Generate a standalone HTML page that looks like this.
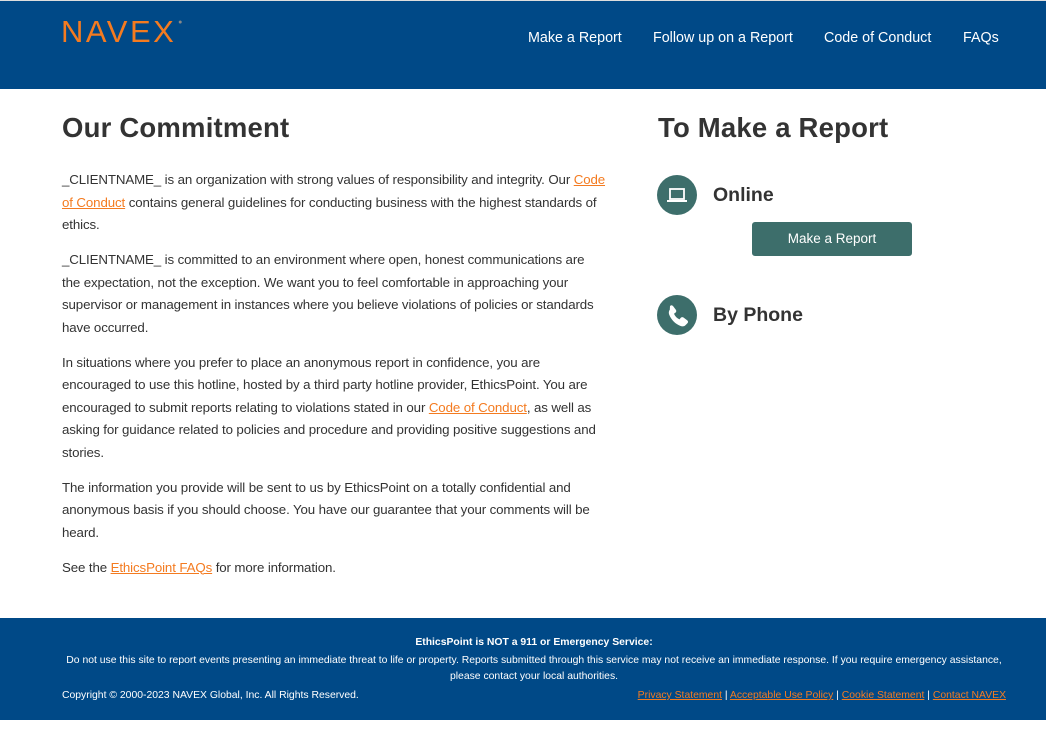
<!DOCTYPE html>
<html><head><meta charset="utf-8"><style>
*{margin:0;padding:0;box-sizing:border-box}
body{width:1046px;height:735px;background:#fff;font-family:"Liberation Sans",Arial,sans-serif;color:#333;position:relative;overflow:hidden}
.hdr{position:absolute;top:1px;left:0;width:1046px;height:88px;background:#004987}
.topline{position:absolute;top:0;left:0;width:1046px;height:1px;background:#ddd}
.logo{position:absolute;left:61px;top:13px;color:#f47b20;font-size:31px;letter-spacing:2.5px;font-weight:normal}
.logo sup{font-size:7px;color:#888;position:absolute;top:5px;right:-6px;letter-spacing:0}
.nav{position:absolute;top:29px;font-size:14.3px;color:#fff}
h1{position:absolute;font-size:27.5px;font-weight:bold;color:#333;letter-spacing:0.2px}
.main{position:absolute;left:62px;top:169px;width:547px;font-size:13.3px;line-height:22.5px;letter-spacing:-0.12px}
.main p{margin-bottom:12.5px}
a{color:#f47b20;text-decoration:underline}
.circ{position:absolute;left:657px;width:40px;height:40px;border-radius:50%;background:#3d6e6b}
.sub{position:absolute;left:713px;font-size:19.5px;font-weight:bold}
.btn{position:absolute;left:752px;top:222px;width:160px;height:34px;background:#3d6e6b;border-radius:3px;color:#fff;font-size:13.5px;text-align:center;line-height:34px}
.ftr{position:absolute;top:618px;left:0;width:1046px;height:102px;background:#004987;color:#fff;font-size:10.4px}
.ftr .c{position:absolute;left:62px;width:944px;text-align:center}
</style></head><body>
<div class="topline"></div>
<div class="hdr">
<div class="logo">NAVEX<sup>●</sup></div>
<div class="nav" style="left:528px">Make a Report</div>
<div class="nav" style="left:653px">Follow up on a Report</div>
<div class="nav" style="left:824px">Code of Conduct</div>
<div class="nav" style="left:963px">FAQs</div>
</div>
<h1 style="left:62px;top:112px">Our Commitment</h1>
<h1 style="left:658px;top:112px">To Make a Report</h1>
<div class="main">
<p>_CLIENTNAME_ is an organization with strong values of responsibility and integrity. Our <a>Code of Conduct</a> contains general guidelines for conducting business with the highest standards of ethics.</p>
<p>_CLIENTNAME_ is committed to an environment where open, honest communications are<br>the expectation, not the exception. We want you to feel comfortable in approaching your supervisor or management in instances where you believe violations of policies or standards have occurred.</p>
<p>In situations where you prefer to place an anonymous report in confidence, you are encouraged to use this hotline, hosted by a third party hotline provider, EthicsPoint. You are encouraged to submit reports relating to violations stated in our <a>Code of Conduct</a>, as well as asking for guidance related to policies and procedure and providing positive suggestions and stories.</p>
<p>The information you provide will be sent to us by EthicsPoint on a totally confidential and anonymous basis if you should choose. You have our guarantee that your comments will be heard.</p>
<p>See the <a>EthicsPoint FAQs</a> for more information.</p>
</div>
<div class="circ" style="top:175px"><svg width="40" height="40" viewBox="0 0 40 40"><rect x="13" y="14" width="14" height="10" fill="none" stroke="#fff" stroke-width="1.8"/><rect x="10" y="25" width="20" height="2" fill="#fff"/></svg></div>
<div class="sub" style="top:184px">Online</div>
<div class="btn">Make a Report</div>
<div class="circ" style="top:295px"><svg width="40" height="40" viewBox="0 0 40 40"><path d="M13 11c1-1 2-1 3 0l3 4c.5 1 .3 2-.5 2.6l-1.5 1.2c1 2.5 3 4.5 5.5 5.6l1.2-1.5c.6-.8 1.7-1 2.6-.5l4 3c1 1 1 2 0 3l-2 2c-1 1-3 1.3-5 .5-5-2-9-6-11-11-.8-2-.5-4 .5-5z" fill="#fff"/></svg></div>
<div class="sub" style="top:304px">By Phone</div>
<div class="ftr">
<div class="c" style="top:19px;font-weight:bold">EthicsPoint is NOT a 911 or Emergency Service:</div>
<div class="c" style="top:35px;line-height:16px">Do not use this site to report events presenting an immediate threat to life or property. Reports submitted through this service may not receive an immediate response. If you require emergency assistance,<br>please contact your local authorities.</div>
<div style="position:absolute;left:62px;top:72px">Copyright © 2000-2023 NAVEX Global, Inc. All Rights Reserved.</div>
<div style="position:absolute;right:40px;top:72px"><a>Privacy Statement</a> | <a>Acceptable Use Policy</a> | <a>Cookie Statement</a> | <a>Contact NAVEX</a></div>
</div>
</body></html>
